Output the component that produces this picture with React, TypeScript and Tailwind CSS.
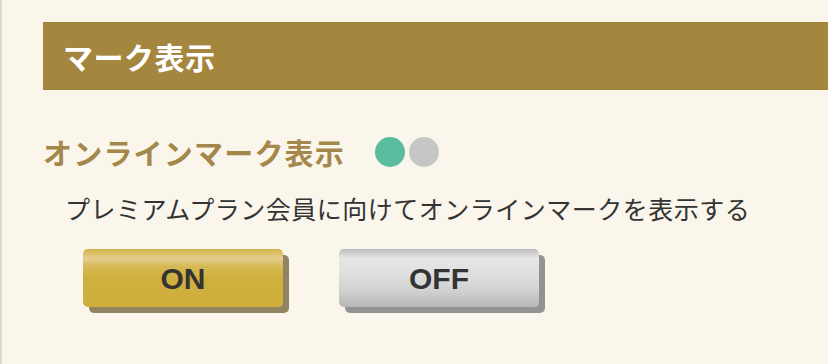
import React from "react";

export default function App() {
  const jp = { fontFamily: '"Noto Sans CJK JP", "Noto Sans", sans-serif' };
  return (
    <div className="w-[828px] h-[364px] bg-[#faf6eb] border-l-[2px] border-[#ddd8ce] overflow-hidden" style={jp}>
      <div className="pl-[41px] pt-[22px]">
        <div className="h-[68px] bg-[#a4863f] flex items-center pl-[20px]">
          <span className="text-white font-bold text-[30px] leading-none tracking-[0.5px]">マーク表示</span>
        </div>
        <div className="mt-[42px] flex items-center h-[40px]">
          <span className="text-[#a4874a] font-bold text-[29px] leading-none tracking-[1.2px]">オンラインマーク表示</span>
          <div className="ml-[30px] flex items-center gap-[4px]">
            <div className="w-[30px] h-[30px] rounded-full bg-[#5bbd9f]" />
            <div className="w-[30px] h-[30px] rounded-full bg-[#c6c6c6]" />
          </div>
        </div>
        <p className="mt-[21px] ml-[22px] text-[25px] leading-[30px] text-[#333333] tracking-[0.5px]">
          プレミアムプラン会員に向けてオンラインマークを表示する
        </p>
        <div className="mt-[26px] ml-[40px] flex gap-[56px]">
          <button
            className="w-[200px] h-[58px] rounded-[5px] shadow-[6px_6px_0_#918462] bg-[linear-gradient(to_bottom,#d2b446_0%,#e4ce8e_16%,#d6b955_30%,#cfb03e_50%,#ceae3c_100%)] flex items-center justify-center text-[30px] font-bold text-[#333333]"
            style={{ fontFamily: '"Liberation Sans", Arial, sans-serif' }}
          >
            ON
          </button>
          <button
            className="w-[200px] h-[58px] rounded-[5px] shadow-[6px_6px_0_#939393] bg-[linear-gradient(to_bottom,#bcbcbc_0%,#e7e7e7_16%,#e0e0e0_40%,#cfcfcf_75%,#b6b6b6_100%)] flex items-center justify-center text-[30px] font-bold text-[#333333]"
            style={{ fontFamily: '"Liberation Sans", Arial, sans-serif' }}
          >
            OFF
          </button>
        </div>
      </div>
    </div>
  );
}
